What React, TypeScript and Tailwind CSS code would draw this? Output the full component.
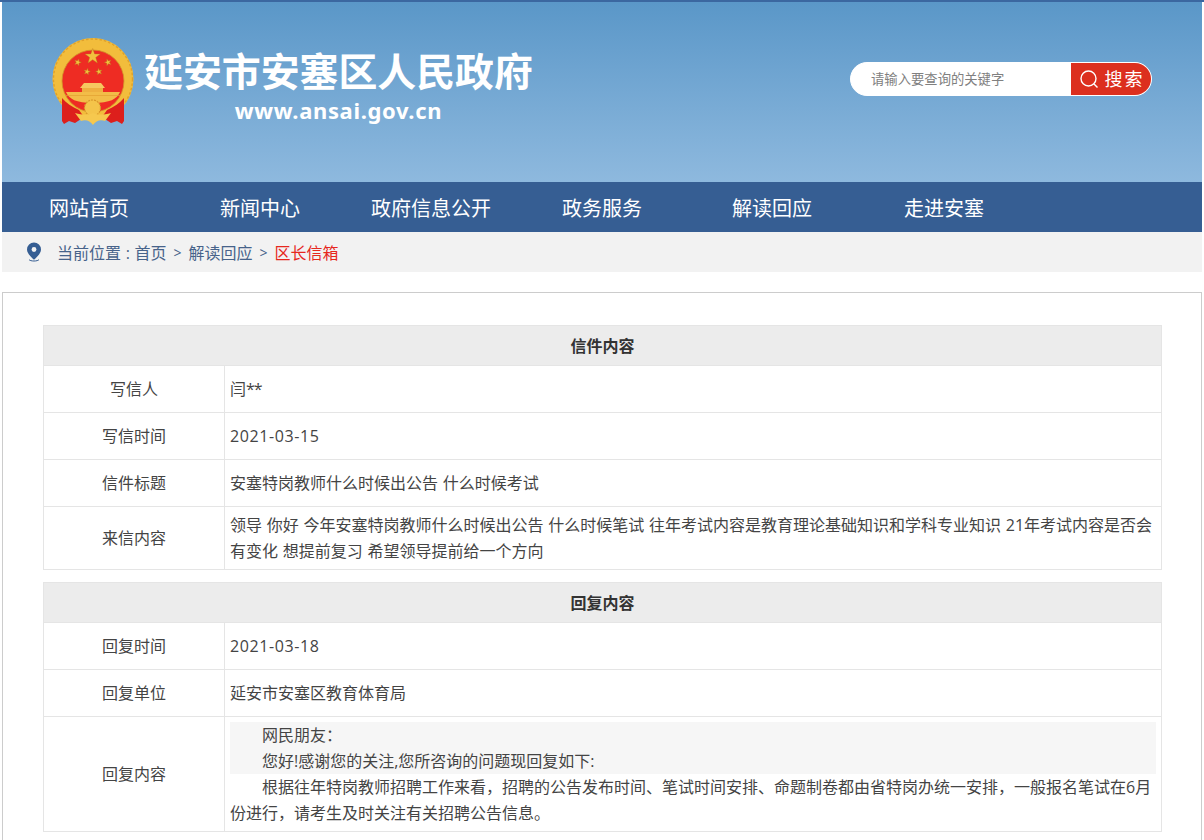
const font = { fontFamily: '"Open Sans", "Noto Sans CJK SC", sans-serif' };

const navItems = [
  { label: '网站首页', w: 'w-[171px]' },
  { label: '新闻中心', w: 'w-[151px]' },
  { label: '政府信息公开', w: 'w-[191px]' },
  { label: '政务服务', w: 'w-[170px]' },
  { label: '解读回应', w: 'w-[172px]' },
  { label: '走进安塞', w: 'w-[160px]' },
];

function Star({ x, y, r, rot = 0 }: { x: number; y: number; r: number; rot?: number }) {
  const pts = [];
  for (let i = 0; i < 10; i++) {
    const rad = i % 2 === 0 ? r : r * 0.4;
    const a = ((-90 + i * 36 + rot) * Math.PI) / 180;
    pts.push(`${(x + rad * Math.cos(a)).toFixed(2)},${(y + rad * Math.sin(a)).toFixed(2)}`);
  }
  return <polygon points={pts.join(' ')} fill="#f3c13e" stroke="#b9771c" strokeWidth="0.4" />;
}

function Emblem() {
  return (
    <svg width="82" height="88" viewBox="0 0 82 88" className="block shrink-0">
      {/* wreath */}
      <ellipse cx="41" cy="42" rx="40.5" ry="41" fill="#f2bd3c" />
      <ellipse cx="41" cy="42" rx="39.5" ry="40" fill="none" stroke="#e0a02a" strokeWidth="1.4" strokeDasharray="2.5 2" />
      <circle cx="41" cy="44" r="31" fill="#ee2c23" stroke="#d2952a" strokeWidth="0.8" />
      <Star x={40.7} y={19.5} r={8} />
      <Star x={25.7} y={25.3} r={3.6} rot={18} />
      <Star x={56} y={25.3} r={3.6} rot={-18} />
      <Star x={35} y={34.7} r={3.4} rot={12} />
      <Star x={47} y={34.7} r={3.4} rot={-12} />
      {/* gate */}
      <path d="M28 51 L32 46 H49 L53 51 Z" fill="#f6c860" />
      <rect x="30" y="51" width="21" height="4" fill="#eeb040" />
      <path d="M14 55 H68 C65 62 58 66 41 66 C24 66 17 62 14 55 Z" fill="#f2bd48" />
      <path d="M14 58.500 H68" stroke="#e2a030" strokeWidth="0.7" />
      {/* ribbons */}
      <path d="M10 61 C14 66 20 70 27 73 L32 80 L23 86 L17 84 L12 87 L10 84 Z" fill="#dd1f1c" />
      <path d="M72 61 C68 66 62 70 55 73 L50 80 L59 86 L65 84 L70 87 L72 84 Z" fill="#dd1f1c" />
      {/* gear and knot */}
      <circle cx="40.500" cy="71" r="8" fill="#f4c44a" stroke="#d8962a" strokeWidth="1.2" strokeDasharray="2 1" />
      <path d="M23 76 C31 78 36 78 41 76 C46 78 51 78 59 76 L53 84 C48 82 44 84 41 88 C38 84 34 82 29 84 Z" fill="#f6c84e" />
    </svg>
  );
}

function Row({ label, children, h }: { label: string; children: React.ReactNode; h: string }) {
  return (
    <tr className={h}>
      <td className="border border-[#e5e5e5] text-center align-middle text-[#444]">{label}</td>
      <td className="border border-[#e5e5e5] px-[5px] text-left align-middle leading-[26px] [word-spacing:0.6px] text-[#444]">{children}</td>
    </tr>
  );
}

function Head({ title }: { title: string }) {
  return (
    <tr className="h-[40px]">
      <th colSpan={2} className="border border-[#e5e5e5] bg-[#ececec] pt-[1px] text-center align-middle text-base font-bold text-[#333]">
        {title}
      </th>
    </tr>
  );
}

function Cols() {
  return (
    <colgroup>
      <col className="w-[181px]" />
      <col />
    </colgroup>
  );
}

export default function App() {
  return (
    <div className="h-[840px] overflow-hidden bg-white text-base" style={font}>
      <div className="h-[2px] bg-[#3b67a0]" />
      <div className="mx-[2px] w-[1200px]">
        <header className="flex h-[180px] justify-between bg-gradient-to-b from-[#5a97c8] to-[#8eb9de] pr-[50px] pl-[50px]">
          <div className="flex items-start pt-[35px]">
            <Emblem />
            <div className="ml-[10px] flex flex-col items-center pt-[7px] text-white">
              <div className="text-[38.9px] leading-[50px] font-bold whitespace-nowrap" style={{ fontFamily: '"Noto Sans CJK SC", sans-serif' }}>
                延安市安塞区人民政府
              </div>
              <div className="mt-[1px] text-[22px] leading-[30px] font-bold tracking-[0.65px]" style={{ fontFamily: '"Noto Sans", sans-serif' }}>
                www.ansai.gov.cn
              </div>
            </div>
          </div>
          <div className="mt-[60px] flex h-[34px] w-[302px] overflow-hidden rounded-full border border-white bg-white">
            <div className="flex flex-1 items-center pt-[2px] pl-[20px] text-[13.33px] text-[#808080]">请输入要查询的关键字</div>
            <div className="flex w-[80px] items-center justify-center gap-[6px] bg-[#dc2f1e] pl-[1px] text-lg text-white">
              <svg width="20" height="20" viewBox="0 0 20 20" fill="none" stroke="white" strokeWidth="1.4">
                <circle cx="9.5" cy="9.5" r="7.5" />
                <path d="M15 15l3.5 3.5" />
              </svg>
              <span className="tracking-[2px]">搜索</span>
            </div>
          </div>
        </header>

        <nav className="flex h-[50px] items-center bg-[#365e93] pt-[4px] pl-[47px] text-xl text-white">
          {navItems.map((item) => (
            <a key={item.label} className={`${item.w} block shrink-0`}>
              {item.label}
            </a>
          ))}
        </nav>

        <div className="flex h-[40px] items-center bg-[#f2f2f2] pl-[24px] text-[#47638a]">
          <svg width="16" height="20" viewBox="0 0 16 20" className="mr-[15px]">
            <path d="M8 0.5a7 7 0 0 1 7 7c0 3.600-3.800 7.400-7 10.200C4.800 14.900 1 11.100 1 7.500a7 7 0 0 1 7-7z" fill="#365e93" />
            <circle cx="8" cy="7.5" r="2.4" fill="#f2f2f2" />
            <path d="M3 17.500c1 2 9 2 10 0" fill="none" stroke="#365e93" strokeWidth="1" />
          </svg>
          <span className="pt-[2px] [word-spacing:0.5px]">当前位置 : 首页</span>
          <span className="mx-[7px] pt-[2px] text-sm">&gt;</span>
          <span className="pt-[2px]">解读回应</span>
          <span className="mx-[7px] pt-[2px] text-sm">&gt;</span>
          <span className="pt-[2px] text-[#e6281e]">区长信箱</span>
        </div>

        <main className="mt-[20px] border border-[#ccc] px-[40px] pt-[32px] pb-[40px]">
          <table className="w-[1119px] table-fixed border-collapse">
            <Cols />
            <tbody>
              <Head title="信件内容" />
              <Row label="写信人" h="h-[47px]">闫<span className="tracking-[-1px]">**</span></Row>
              <Row label="写信时间" h="h-[47px]"><span className="tracking-[0.6px]">2021-03-15</span></Row>
              <Row label="信件标题" h="h-[47px]">安塞特岗教师什么时候出公告 什么时候考试</Row>
              <Row label="来信内容" h="h-[63px]">
                领导 你好 今年安塞特岗教师什么时候出公告 什么时候笔试 往年考试内容是教育理论基础知识和学科专业知识 21年考试内容是否会有变化 想提前复习 希望领导提前给一个方向
              </Row>
            </tbody>
          </table>
          <table className="mt-[12px] w-[1119px] table-fixed border-collapse">
            <Cols />
            <tbody>
              <Head title="回复内容" />
              <Row label="回复时间" h="h-[47px]"><span className="tracking-[0.6px]">2021-03-18</span></Row>
              <Row label="回复单位" h="h-[47px]">延安市安塞区教育体育局</Row>
              <Row label="回复内容" h="h-[115px]">
                <div className="bg-[#f6f6f6] indent-8">
                  <p>网民朋友：</p>
                  <p>您好!感谢您的关注,您所咨询的问题现回复如下:</p>
                </div>
                <p className="indent-8">
                  根据往年特岗教师招聘工作来看，招聘的公告发布时间、笔试时间安排、命题制卷都由省特岗办统一安排，一般报名笔试在6月份进行，请考生及时关注有关招聘公告信息。
                </p>
              </Row>
            </tbody>
          </table>
        </main>
      </div>
    </div>
  );
}
